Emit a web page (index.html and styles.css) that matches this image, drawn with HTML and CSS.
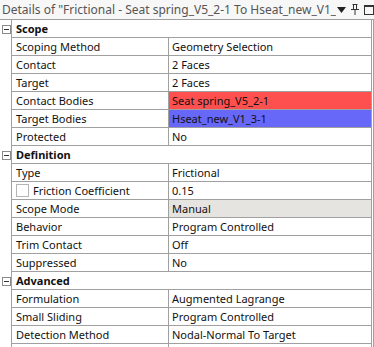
FILE: index.html
```html
<!DOCTYPE html>
<html lang="en">
  <head>
    <title>Details</title>
    <meta charset="utf-8" />
    <link rel="stylesheet" href="styles.css">
  </head>
  <body>
    <div class="panel">
      <div class="title">
        <span class="title-text">Details of "Frictional - Seat spring_V5_2-1 To Hseat_new_V1_3-1"</span>
        <span class="title-icons">
          <svg width="9" height="6" viewBox="0 0 9 6"><path d="M0 0h9L4.5 6z" fill="#222"/></svg>
          <svg width="8" height="11" viewBox="0 0 8 11"><path d="M1.5 0.5h5M2.5 0.5v5M5.5 0.5v5M0 5.5h8M4 5.5v5.5" stroke="#333" fill="none"/></svg>
          <svg width="10" height="10" viewBox="0 0 10 10"><rect x="0.5" y="0.5" width="9" height="9" stroke="#333" fill="none"/><path d="M0 1.5h10" stroke="#333"/></svg>
          <span class="close">x</span>
        </span>
      </div>

      <div class="grid">
        <div class="line">
          <span class="tog"><span class="box"></span></span>
          <div class="row section">Scope</div>
        </div>
        <div class="line"><span class="tog"></span><div class="row"><span class="k">Scoping Method</span><span class="v">Geometry Selection</span></div></div>
        <div class="line"><span class="tog"></span><div class="row"><span class="k">Contact</span><span class="v">2 Faces</span></div></div>
        <div class="line"><span class="tog"></span><div class="row"><span class="k">Target</span><span class="v">2 Faces</span></div></div>
        <div class="line"><span class="tog"></span><div class="row"><span class="k">Contact Bodies</span><span class="v red">Seat spring_V5_2-1</span></div></div>
        <div class="line"><span class="tog"></span><div class="row"><span class="k">Target Bodies</span><span class="v blue">Hseat_new_V1_3-1</span></div></div>
        <div class="line"><span class="tog"></span><div class="row"><span class="k">Protected</span><span class="v">No</span></div></div>

        <div class="line">
          <span class="tog"><span class="box"></span></span>
          <div class="row section">Definition</div>
        </div>
        <div class="line"><span class="tog"></span><div class="row"><span class="k">Type</span><span class="v">Frictional</span></div></div>
        <div class="line"><span class="tog"></span><div class="row"><span class="k"><span class="check"></span>Friction Coefficient</span><span class="v">0.15</span></div></div>
        <div class="line"><span class="tog"></span><div class="row"><span class="k">Scope Mode</span><span class="v grey">Manual</span></div></div>
        <div class="line"><span class="tog"></span><div class="row"><span class="k">Behavior</span><span class="v">Program Controlled</span></div></div>
        <div class="line"><span class="tog"></span><div class="row"><span class="k">Trim Contact</span><span class="v">Off</span></div></div>
        <div class="line"><span class="tog"></span><div class="row"><span class="k">Suppressed</span><span class="v">No</span></div></div>

        <div class="line">
          <span class="tog"><span class="box"></span></span>
          <div class="row section">Advanced</div>
        </div>
        <div class="line"><span class="tog"></span><div class="row"><span class="k">Formulation</span><span class="v">Augmented Lagrange</span></div></div>
        <div class="line"><span class="tog"></span><div class="row"><span class="k">Small Sliding</span><span class="v">Program Controlled</span></div></div>
        <div class="line"><span class="tog"></span><div class="row"><span class="k">Detection Method</span><span class="v">Nodal-Normal To Target</span></div></div>
        <div class="line"><span class="tog"></span><div class="row"><span class="k"></span><span class="v"></span></div></div>
      </div>
    </div>
  </body>
</html>
```

FILE: styles.css
```css
body {
  margin: 0;
  background: #fff;
  font-family: "Noto Sans", sans-serif;
  font-size: 11px;
  color: #111;
  overflow: hidden;
}

.panel {
  width: 374px;
  height: 347px;
  overflow: hidden;
}

.title {
  display: flex;
  align-items: center;
  height: 19px;
  background: #f7f7f7;
  white-space: nowrap;
  overflow: hidden;
}

.title-text {
  flex: none;
  width: 334px;
  padding-left: 2px;
  overflow: hidden;
  font-size: 12px;
  color: #555;
}

.title-icons {
  flex: none;
  display: flex;
  align-items: center;
  gap: 5px;
  padding-left: 1px;
}

.close {
  font-size: 13px;
  color: #333;
}

.grid {
  width: 374px;
  border-top: 1px solid #a0a0a0;
  border-right: 1px solid #a0a0a0;
  box-sizing: border-box;
}

.line {
  display: flex;
  height: 18px;
}

.tog {
  width: 11px;
  flex: none;
  display: flex;
  align-items: center;
  padding-left: 2px;
  box-sizing: border-box;
}

.box {
  position: relative;
  width: 7px;
  height: 7px;
  border: 1px solid #8a8a8a;
  background: #fff;
}

.box::after {
  content: "";
  position: absolute;
  left: 1px;
  top: 3px;
  width: 5px;
  height: 1px;
  background: #333;
}

.row {
  display: grid;
  grid-template-columns: 157px 202px;
  width: 361px;
  border-left: 1px solid #a0a0a0;
  border-right: 1px solid #a0a0a0;
  border-bottom: 1px solid #a0a0a0;
  box-sizing: border-box;
  line-height: 17px;
  white-space: nowrap;
}

.row.section {
  display: block;
  padding-left: 4px;
  font-weight: bold;
}

.k {
  display: flex;
  align-items: center;
  padding-left: 4px;
  border-right: 1px solid #a0a0a0;
}

.v {
  padding-left: 3px;
}

.red {
  background: #ff5050;
}

.blue {
  background: #6868f8;
}

.grey {
  background: #e6e4e1;
}

.check {
  width: 11px;
  height: 11px;
  margin-right: 4px;
  border: 1px solid #b5b5b5;
  background: #fff;
}
```
